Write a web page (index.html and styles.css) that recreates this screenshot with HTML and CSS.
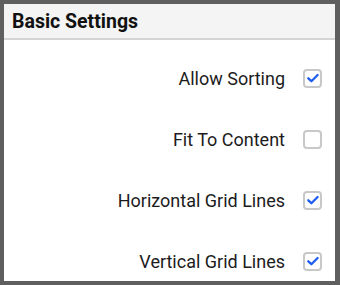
FILE: index.html
```
<!DOCTYPE html>
<html lang="en">
<head>
    <meta charset="UTF-8">
    <meta name="viewport" content="width=device-width, initial-scale=1.0">
    <title>Basic Settings</title>
    <link rel="stylesheet" href="styles.css">
</head>
<body>
    <div class="panel">
        <div class="panel-header">
            <h1>Basic Settings</h1>
        </div>

        <div class="settings-list">
            <label class="setting-row">
                <span class="setting-label">Allow Sorting</span>
                <span class="check checked">
                    <svg viewBox="0 0 14 14" width="14" height="14"><path d="M2.3 7.3 L5.4 10.2 L11.6 4"/></svg>
                </span>
            </label>
            <label class="setting-row">
                <span class="setting-label">Fit To Content</span>
                <span class="check"></span>
            </label>
            <label class="setting-row">
                <span class="setting-label">Horizontal Grid Lines</span>
                <span class="check checked">
                    <svg viewBox="0 0 14 14" width="14" height="14"><path d="M2.3 7.3 L5.4 10.2 L11.6 4"/></svg>
                </span>
            </label>
            <label class="setting-row">
                <span class="setting-label">Vertical Grid Lines</span>
                <span class="check checked">
                    <svg viewBox="0 0 14 14" width="14" height="14"><path d="M2.3 7.3 L5.4 10.2 L11.6 4"/></svg>
                </span>
            </label>
        </div>
    </div>
</body>
</html>
```

FILE: styles.css
```
:root {
    --frame: #5f5f5f;
    --header-bg: #f4f4f4;
    --divider: #d4d4d4;
    --text: #1c1c1c;
    --check-border: #c8c8c8;
    --check-blue: #1f5cf0;
}

* {
    margin: 0;
    padding: 0;
    box-sizing: border-box;
}

body {
    font-family: Roboto, 'Liberation Sans', sans-serif;
    background: var(--frame);
    color: var(--text);
    padding: 4px 5px 4px 4px;
}

.panel {
    background: #ffffff;
    height: 277px;
    overflow: hidden;
}

.panel-header {
    height: 36px;
    background: var(--header-bg);
    border-bottom: 2px solid var(--divider);
    padding: 0 8px;
    display: flex;
    align-items: center;
}

.panel-header h1 {
    font-size: 19.5px;
    font-weight: 700;
    color: #111111;
}

.settings-list {
    display: flex;
    flex-direction: column;
    gap: 19px;
    padding: 17px 13px 0 0;
}

.setting-row {
    height: 42px;
    display: flex;
    align-items: center;
    justify-content: flex-end;
    gap: 18px;
}

.setting-label {
    font-size: 18px;
}

.check {
    width: 19px;
    height: 19px;
    border: 2px solid var(--check-border);
    border-radius: 4px;
    display: flex;
    align-items: center;
    justify-content: center;
}

.check svg path {
    fill: none;
    stroke: var(--check-blue);
    stroke-width: 2.3;
    stroke-linecap: round;
    stroke-linejoin: round;
}
```
